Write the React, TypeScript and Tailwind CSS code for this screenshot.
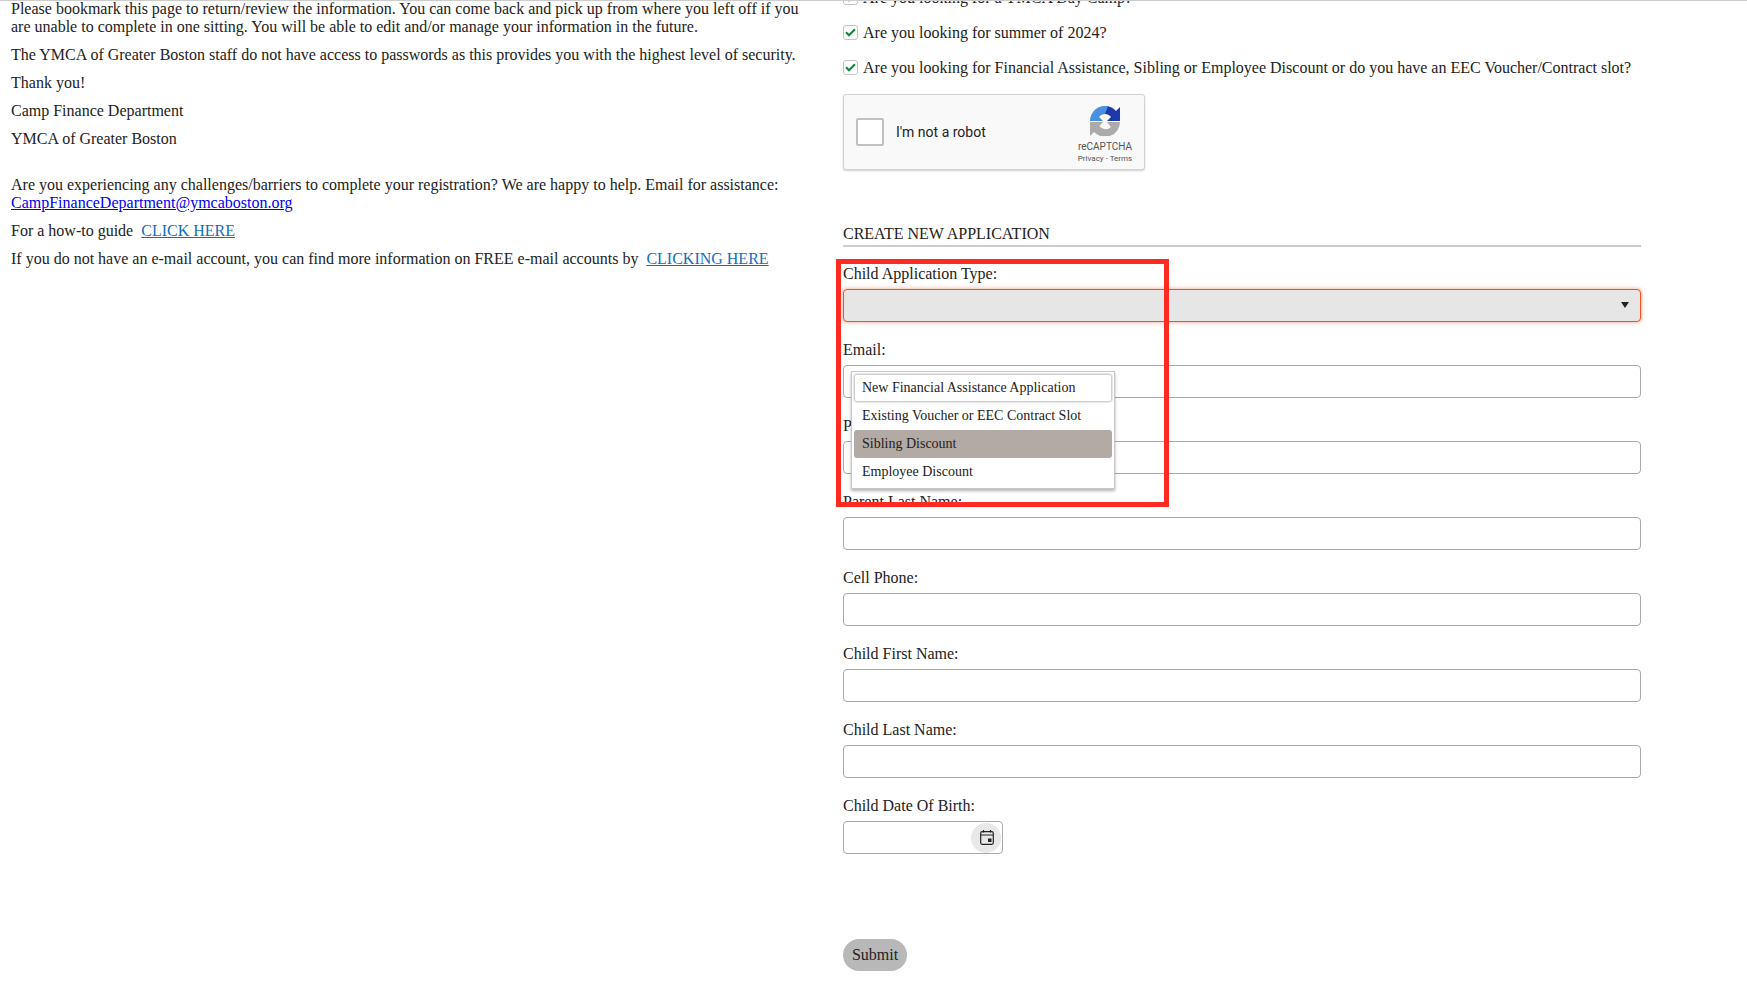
const fields = ["Email:", "Parent First Name:", "Parent Last Name:", "Cell Phone:", "Child First Name:", "Child Last Name:"];
const options = ["New Financial Assistance Application", "Existing Voucher or EEC Contract Slot", "Sibling Discount", "Employee Discount"];

const Tick = () => (
  <span className="-mt-[2px] flex h-[15px] w-[15px] shrink-0 items-center justify-center rounded-[3px] border border-[#c4c4c4] bg-white">
    <svg width="11" height="9" viewBox="0 0 11 9" fill="none">
      <path d="M1 4.3 L4 7.3 L10 1.2" stroke="#0b8a35" strokeWidth="2" />
    </svg>
  </span>
);

const Recaptcha = () => (
  <div className="mt-[17px] flex h-[76px] w-[302px] items-center rounded-[3px] border border-[#d3d3d3] bg-[#f9f9f9] pl-[12px] shadow-[0_1px_2px_rgba(0,0,0,0.2)] font-['Roboto',sans-serif]">
    <span className="h-[28px] w-[28px] rounded-[2px] border-2 border-[#c1c1c1] bg-white" />
    <span className="ml-[12px] text-[14px] text-[#222]">I'm not a robot</span>
    <div className="ml-auto mr-[10px] flex w-[58px] flex-col items-center pt-[6px]">
      <svg width="30" height="30" viewBox="0 0 30 30" className="mb-[5px]">
        <path d="M15 0 A15 15 0 0 1 26 5 L30 1 V15 H17 L21 11 A7.5 7.5 0 0 0 15 8 L13 3 Z" fill="#1c3aa9" />
        <path d="M0 15 V14 A15 15 0 0 1 18 0.3 L15 8 A7.5 7.5 0 0 0 9 11 L13 15 Z" fill="#4a90e2" />
        <path d="M0 16 H13 L9.5 20 A7.5 7.5 0 0 0 21 21 L17 16 H30 A15 15 0 0 1 4 26 L0 30 Z" fill="#ababab" />
      </svg>
      <span className="text-[10px] leading-[12px] text-[#555]">reCAPTCHA</span>
      <span className="whitespace-nowrap text-[8px] leading-[11px] text-[#555]">Privacy - Terms</span>
    </div>
  </div>
);

export default function App() {
  return (
    <div className="relative h-[989px] overflow-hidden bg-white font-['Liberation_Serif',serif] text-[16px] leading-[18px] text-[#222]">
      <div className="absolute inset-x-0 top-0 z-10 h-px bg-[#cccccc]" />
      <div className="flex">
        <div className="w-[843px] shrink-0 pl-[11px]">
          <div className="flex w-[800px] flex-col gap-[10px]">
            <p>
              Please bookmark this page to return/review the information. You can come back and pick up from where you left off if you are unable to complete in one sitting. You will be able to edit and/or manage your information in the future.
            </p>
            <p>The YMCA of Greater Boston staff do not have access to passwords as this provides you with the highest level of security.</p>
            <p>Thank you!</p>
            <p>Camp Finance Department</p>
            <p>YMCA of Greater Boston</p>
            <p className="mt-[18px]">
              Are you experiencing any challenges/barriers to complete your registration? We are happy to help. Email for assistance:{" "}
              <a href="#" className="text-[#0000ee] underline">CampFinanceDepartment@ymcaboston.org</a>
            </p>
            <p>
              For a how-to guide&nbsp;&nbsp;<a href="#" className="text-[#106ebe] underline">CLICK HERE</a>
            </p>
            <p>
              If you do not have an e-mail account, you can find more information on FREE e-mail accounts by&nbsp;&nbsp;
              <a href="#" className="text-[#106ebe] underline">CLICKING HERE</a>
            </p>
          </div>
        </div>

        <div className="-mt-[11px] w-[798px] shrink-0">
          <div className="flex flex-col gap-[17px]">
            {["Are you looking for a YMCA Day Camp?", "Are you looking for summer of 2024?", "Are you looking for Financial Assistance, Sibling or Employee Discount or do you have an EEC Voucher/Contract slot?"].map((q) => (
              <label key={q} className="flex items-center gap-[5px] whitespace-nowrap">
                <Tick />
                {q}
              </label>
            ))}
          </div>
          <Recaptcha />

          <h2 className="mt-[55px] border-b-2 border-[#cccccc] pb-[2px] font-normal">CREATE NEW APPLICATION</h2>

          <div className="mt-[18px]">
            <label className="block">Child Application Type:</label>
            <button className="mt-[6px] flex h-[33px] w-full items-center justify-end rounded-[4px] border border-[#f4511e] bg-[#e6e6e6] pr-[11px] shadow-[0_0_4px_rgba(244,81,30,0.6)]">
              <svg width="8" height="6" viewBox="0 0 8 6" className="mb-[1px]">
                <path d="M0 0 H8 L4 6 Z" fill="#222" />
              </svg>
            </button>
          </div>

          {fields.map((f) => (
            <div key={f} className="mt-[19px]">
              <label className="block">{f}</label>
              <input className="mt-[6px] block h-[33px] w-full rounded-[4px] border border-[#aaaaaa] bg-white" />
            </div>
          ))}

          <div className="mt-[19px]">
            <label className="block">Child Date Of Birth:</label>
            <div className="mt-[6px] flex h-[33px] w-[160px] items-center justify-end rounded-[4px] border border-[#aaaaaa] bg-white pr-[1px]">
              <span className="flex h-[30px] w-[30px] items-center justify-center rounded-full bg-[#e8e8e8] pl-[1px]">
                <svg width="14" height="15" viewBox="0 0 14 15" fill="none">
                  <rect x="0.7" y="1.7" width="12.6" height="12.6" rx="1.5" stroke="#222" strokeWidth="1.2" />
                  <path d="M0.7 5 H13.3 M3.5 0 V2.5 M10.5 0 V2.5" stroke="#222" strokeWidth="1.2" />
                  <rect x="8" y="8.5" width="3.5" height="3.5" fill="#222" />
                </svg>
              </span>
            </div>
          </div>

          <button className="mt-[85px] flex h-[32px] w-[64px] items-center justify-center rounded-full bg-[#b8b8b8]">Submit</button>
        </div>
      </div>

      <ul className="absolute left-[851px] top-[371px] w-[264px] border border-[#c8c8c8] bg-white px-[2px] py-[2px] text-[14px] shadow-[0_2px_3px_rgba(0,0,0,0.3)]">
        {options.map((o, i) => (
          <li
            key={o}
            className={
              i === 0
                ? "flex h-[28px] items-center rounded-[3px] border border-[#cfcfcf] pl-[7px] shadow-[0_0_2px_rgba(0,0,0,0.35)]"
                : i === 2
                  ? "flex h-[28px] items-center rounded-[3px] bg-[#b3aaa5] pl-[8px]"
                  : "flex h-[28px] items-center pl-[8px]"
            }
          >
            {o}
          </li>
        ))}
      </ul>

      <div className="pointer-events-none absolute left-[836px] top-[259px] h-[248px] w-[333px] border-[5px] border-[#ff2a22]" />
    </div>
  );
}
